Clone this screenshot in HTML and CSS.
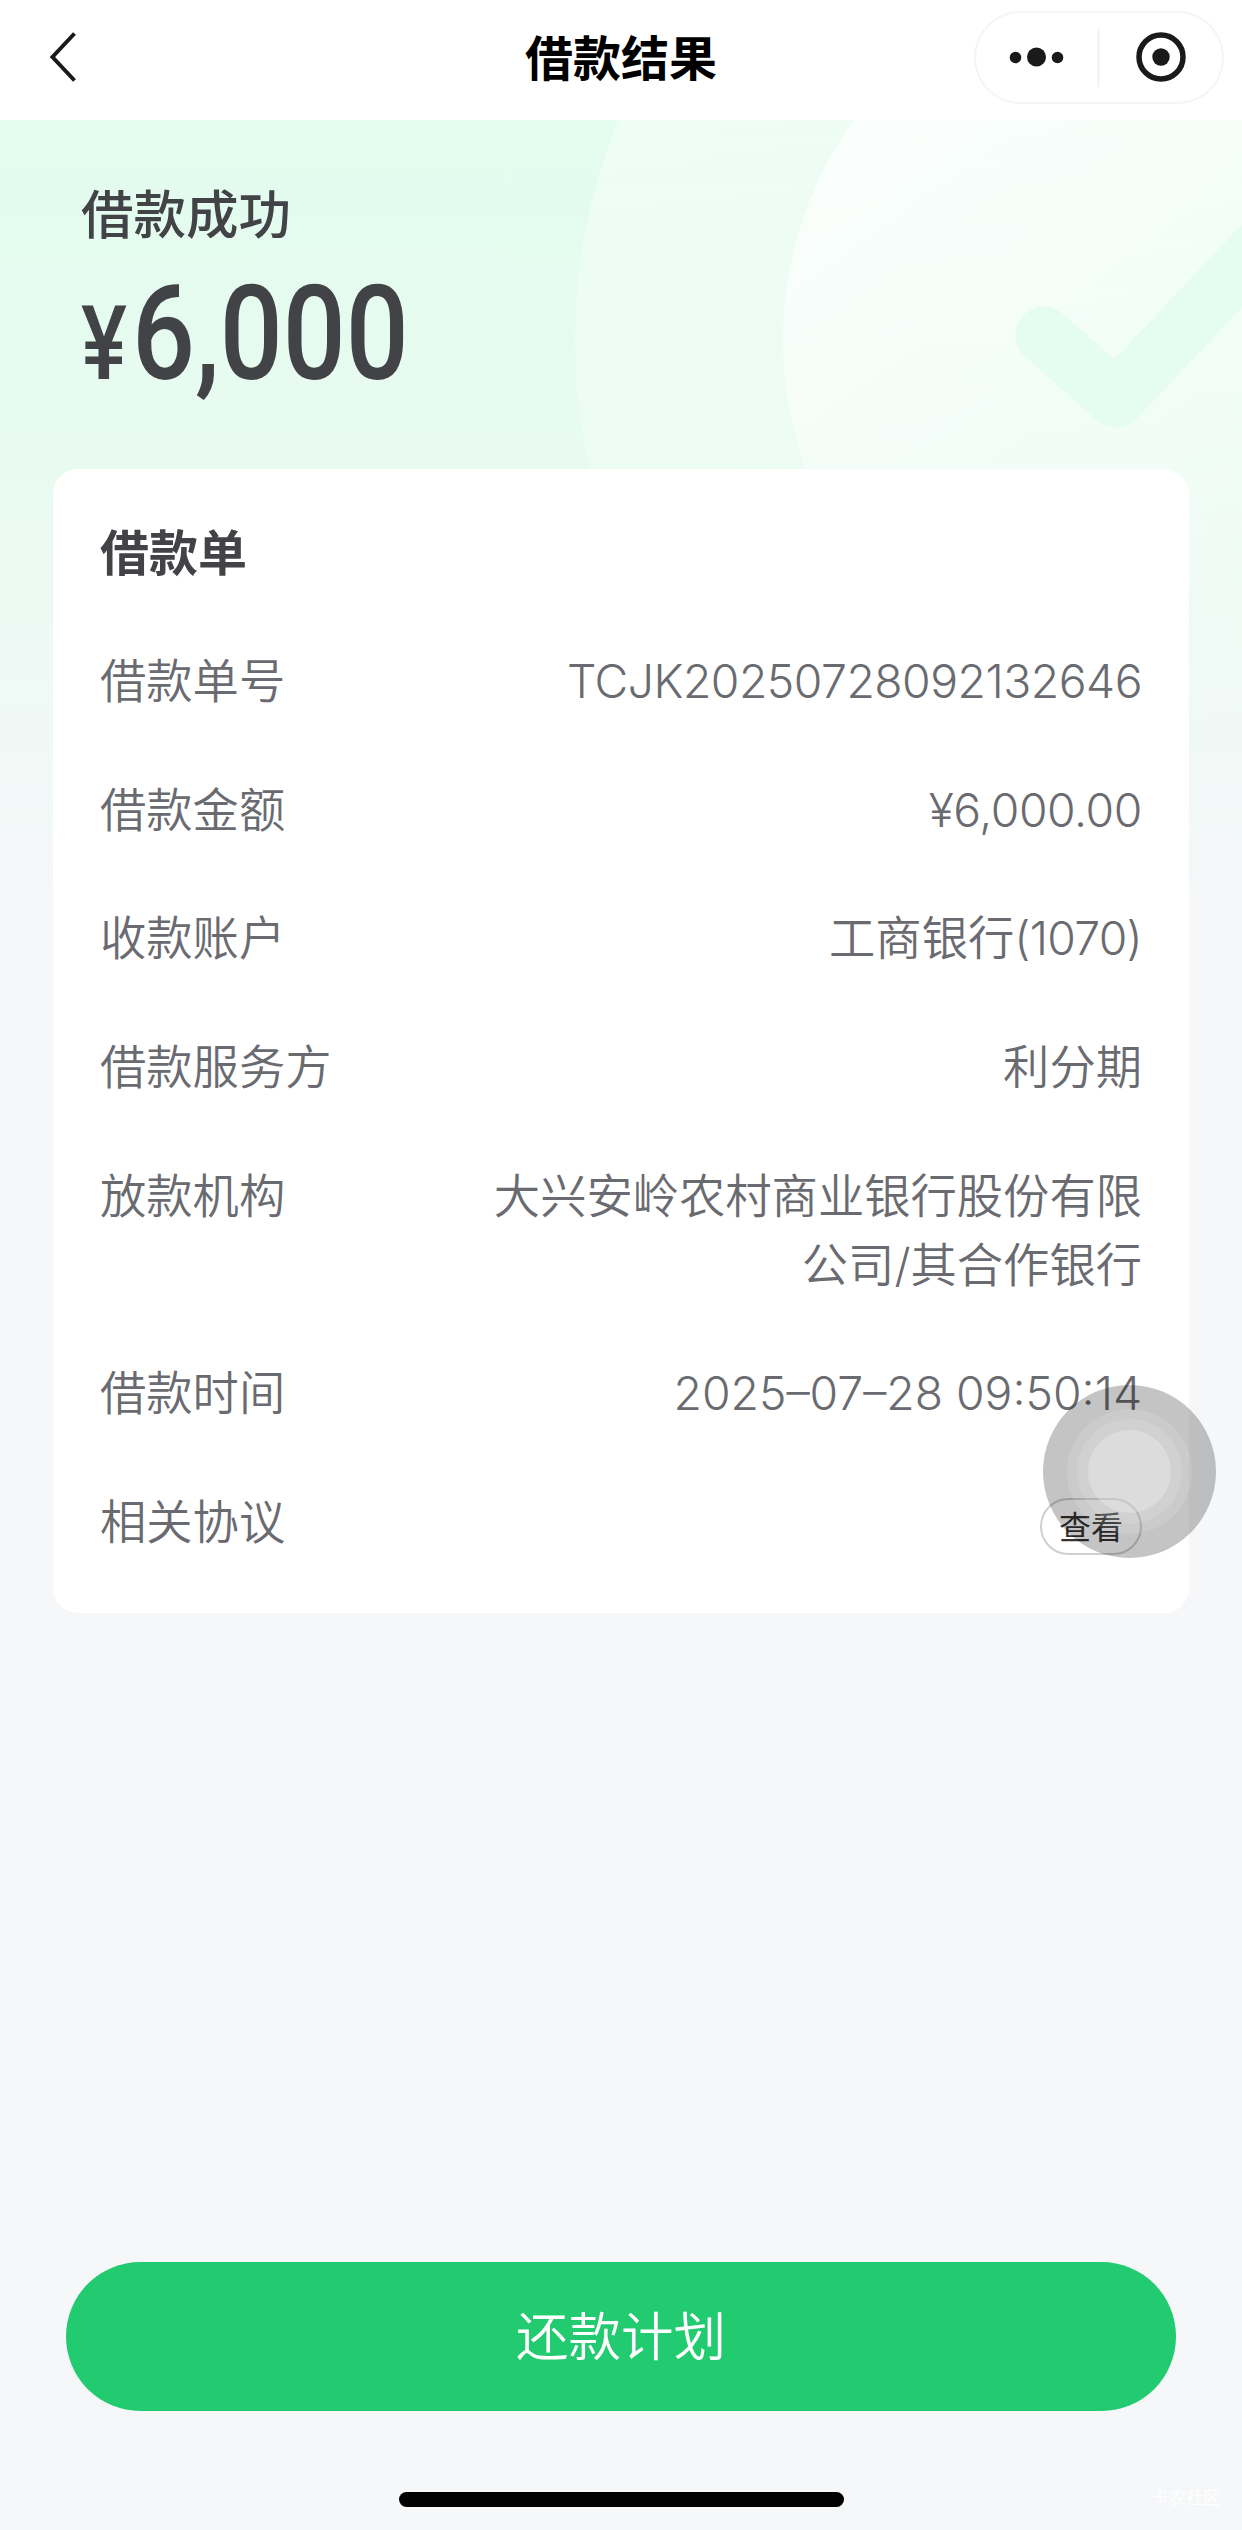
FILE: index.html
```html
<!DOCTYPE html>
<html lang="zh-CN">
<head>
    <meta charset="UTF-8"/>
    <meta name="viewport" content="width=device-width, initial-scale=1.0"/>
    <title>借款结果</title>
    <link rel="stylesheet" href="styles.css">
</head>
<body>

<header>
    <a class="back" href="#">
        <svg width="28" height="52" viewBox="0 0 28 52" fill="none" stroke="#1a1a1a" stroke-width="4">
            <path d="M25.5 2.5 3.5 26l22 23.5"/>
        </svg>
    </a>
    <h1>借款结果</h1>
    <div class="capsule">
        <svg width="250" height="93" viewBox="0 0 250 93">
            <g fill="#1a1a1a">
                <circle cx="41.5" cy="46.5" r="5.8"/>
                <circle cx="62.5" cy="46" r="9.5"/>
                <circle cx="83.5" cy="46.5" r="5.8"/>
                <circle cx="187" cy="46" r="8.7"/>
            </g>
            <path d="M124.5 18v58" stroke="#ededed" stroke-width="1.5"/>
            <circle cx="187" cy="46" r="22" fill="none" stroke="#1a1a1a" stroke-width="5.5"/>
        </svg>
    </div>
</header>

<main>
    <svg class="backdrop" width="1242" height="780" viewBox="0 0 1242 780">
        <defs>
            <linearGradient id="fadeOuter" x1="0" y1="0" x2="0.1" y2="1">
                <stop offset="0.3" stop-color="#fff" stop-opacity="0.42"/>
                <stop offset="0.85" stop-color="#fff" stop-opacity="0"/>
            </linearGradient>
            <linearGradient id="fadeInner" x1="0" y1="0.2" x2="0.5" y2="0.9">
                <stop offset="0" stop-color="#fff" stop-opacity="0.78"/>
                <stop offset="1" stop-color="#fff" stop-opacity="0.1"/>
            </linearGradient>
        </defs>
        <circle cx="1160" cy="220" r="585" fill="url(#fadeOuter)"/>
        <circle cx="1160" cy="220" r="377" fill="url(#fadeInner)"/>
        <path d="M1044 215 1116 279 1271 115" fill="none" stroke="#e4fcf2" stroke-width="57"
              stroke-linecap="round" stroke-linejoin="round"/>
    </svg>

    <section class="result">
        <h2>借款成功</h2>
        <div class="amount"><span class="yen">¥</span>6,000</div>
    </section>

    <section class="card">
        <h3>借款单</h3>
        <dl>
            <div class="row">
                <dt>借款单号</dt>
                <dd class="serial">TCJK20250728092132646</dd>
            </div>
            <div class="row">
                <dt>借款金额</dt>
                <dd class="money">¥6,000.00</dd>
            </div>
            <div class="row">
                <dt>收款账户</dt>
                <dd>工商银行<span class="num">(1070)</span></dd>
            </div>
            <div class="row">
                <dt>借款服务方</dt>
                <dd>利分期</dd>
            </div>
            <div class="row">
                <dt>放款机构</dt>
                <dd>大兴安岭农村商业银行股份有限公司/其合作银行</dd>
            </div>
            <div class="row">
                <dt>借款时间</dt>
                <dd>2025–07–28 09:50:14</dd>
            </div>
            <div class="row">
                <dt>相关协议</dt>
                <dd><a class="view" href="#">查看</a></dd>
            </div>
        </dl>
    </section>
</main>

<footer>
    <button class="plan">还款计划</button>
    <div class="home-bar"></div>
    <span class="watermark">卡农社区</span>
</footer>

<!-- floating assistive button -->
<div class="assist"><i></i><i></i><i></i></div>

</body>
</html>
```
FILE: styles.css
```css
* {
    box-sizing: border-box;
}

body {
    font-family: Inter, 'Noto Sans CJK SC', sans-serif;
    margin: 0;
    position: relative;
    width: 1242px;
    height: 2530px;
    display: flex;
    flex-direction: column;
    background: #f5f7f9;
    color: #424347;
    overflow: hidden;
}

h1, h2, h3, dl, dd {
    margin: 0;
}

a {
    color: inherit;
    text-decoration: none;
}

header {
    height: 120px;
    display: grid;
    grid-template-columns: 1fr auto 1fr;
    align-items: center;
    padding: 0 18px 6px;
    background: #fff;
}

.back {
    height: 52px;
    padding-left: 31px;
}

h1 {
    font-size: 48px;
    line-height: 70px;
    font-weight: 700;
    color: #000;
    padding-top: 3px;
}

.capsule {
    justify-self: end;
    width: 250px;
    height: 93px;
    border-radius: 47px;
    box-shadow: inset 0 0 0 2px #f5f5f5;
}

main {
    flex: 1;
    position: relative;
    padding: 0 53px;
    background: linear-gradient(#e2fcee 0, #e9fbf1 350px, #f5f7f9 780px);
}

.backdrop {
    position: absolute;
    top: 0;
    left: 0;
}

.result {
    position: relative;
    height: 349px;
    padding: 57px 28px 0;
}

h2 {
    font-size: 52.5px;
    line-height: 76px;
    font-weight: 500;
}

.amount {
    font-family: Roboto, sans-serif;
    font-size: 132px;
    line-height: 140px;
    font-weight: 500;
    margin-top: 11px;
    transform: scaleX(0.84);
    transform-origin: left;
}

.yen {
    font-size: 103px;
    margin-right: 6px;
}

.card {
    position: relative;
    height: 1144px;
    padding: 50px 47px 0;
    border-radius: 25px;
    background: #fff;
}

h3 {
    font-size: 49px;
    line-height: 70px;
    font-weight: 700;
}

dl {
    margin-top: 58px;
    display: flex;
    flex-direction: column;
    gap: 59.7px;
}

.row {
    display: flex;
    justify-content: space-between;
    font-size: 46.3px;
    font-weight: 350;
    line-height: 69px;
    color: #6a6b71;
}

dd {
    max-width: 660px;
    text-align: right;
}

.serial {
    letter-spacing: -0.5px;
}

.num {
    letter-spacing: -0.7px;
}

.money {
    letter-spacing: -0.4px;
}

.view {
    display: block;
    width: 102px;
    height: 57px;
    margin-top: 10px;
    border: 2px solid #cfcfcf;
    border-radius: 29px;
    font-size: 32px;
    font-weight: 400;
    line-height: 55px;
    text-align: center;
    color: #333;
}

footer {
    position: relative;
    height: 268px;
    padding: 0 66px;
}

.plan {
    display: block;
    width: 100%;
    height: 149px;
    padding: 0 0 7px;
    border: 0;
    border-radius: 75px;
    background: #22cb70;
    color: #fff;
    font-family: inherit;
    font-size: 52.5px;
    font-weight: 350;
}

.home-bar {
    width: 445px;
    height: 15px;
    margin: 81px auto 0;
    border-radius: 8px;
    background: #000;
}

.watermark {
    position: absolute;
    right: 22px;
    bottom: 20px;
    font-size: 17px;
    line-height: 24px;
    color: #fff;
}

.assist {
    position: absolute;
    left: 1043px;
    top: 1385px;
    width: 173px;
    height: 173px;
    border-radius: 50%;
    background: rgba(0, 0, 0, 0.23);
}

.assist i {
    position: absolute;
    inset: 24px;
    border-radius: 50%;
    background: rgba(255, 255, 255, 0.12);
}

.assist i:nth-child(2) {
    inset: 34px;
}

.assist i:nth-child(3) {
    inset: 45px;
    background: rgba(255, 255, 255, 0.25);
}
```
